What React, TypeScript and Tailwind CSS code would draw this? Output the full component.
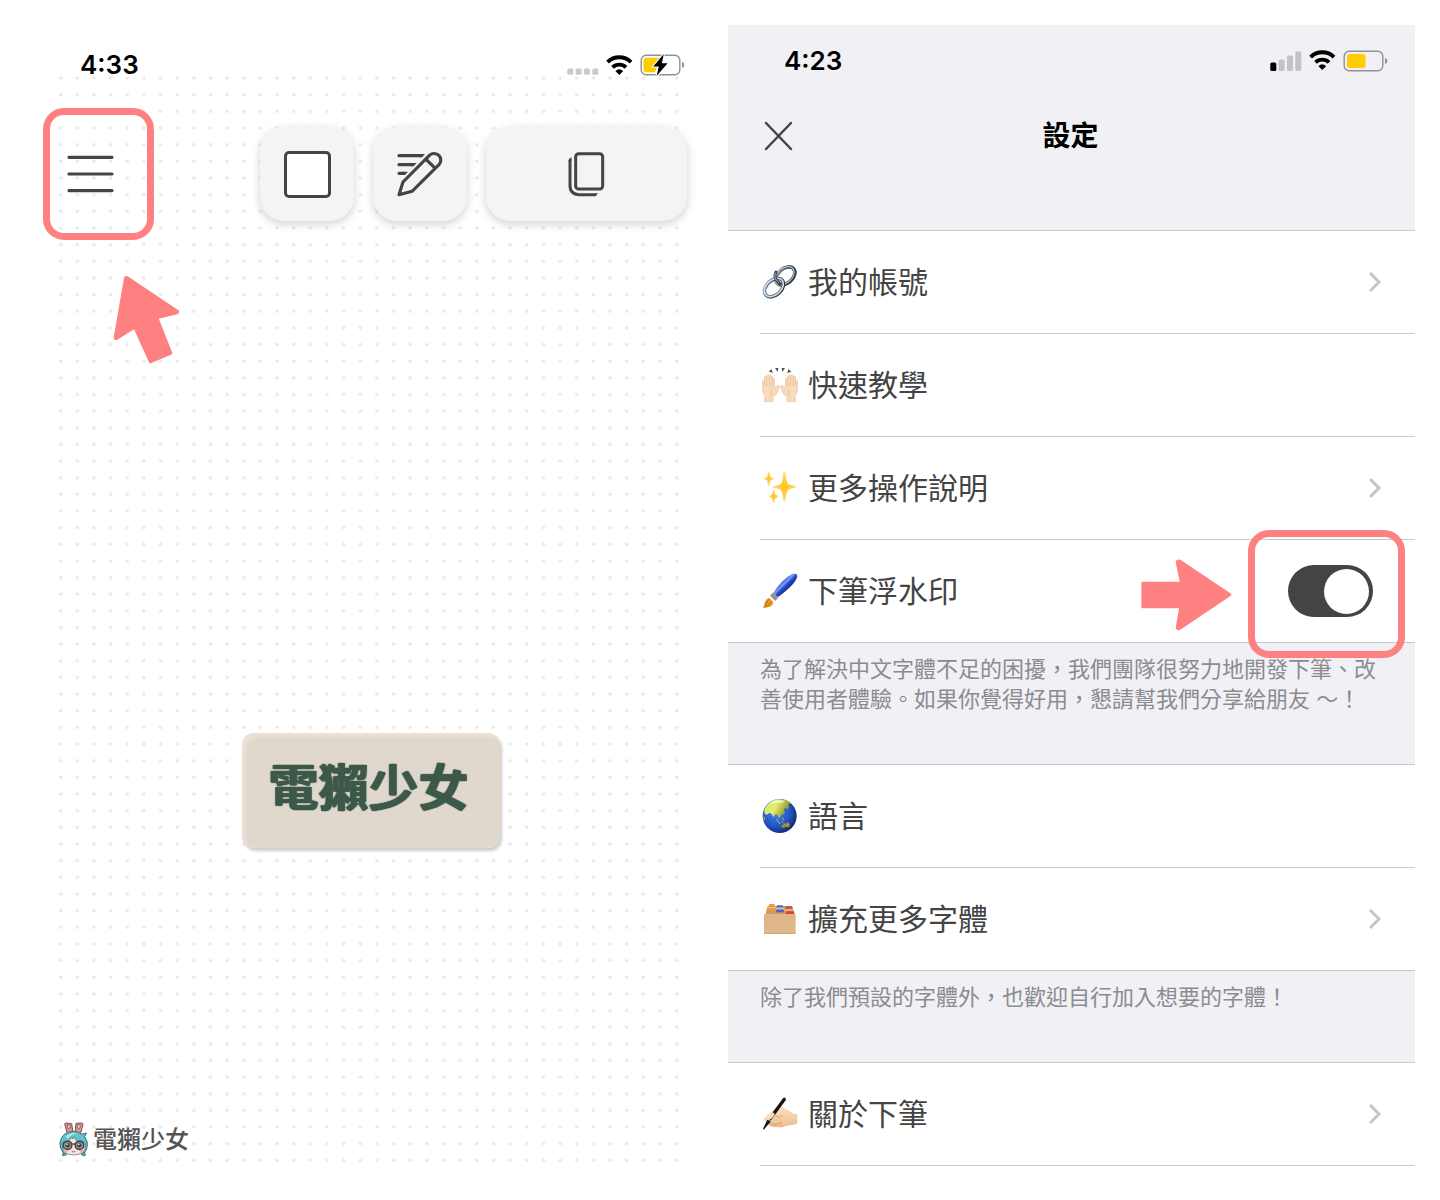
import type { ReactNode } from "react";

const CJK = "font-['Inter','Noto_Sans_CJK_TC',sans-serif]";

/* ---------- status bar ---------- */

function Wifi() {
  return (
    <svg width="27" height="21" viewBox="0 0 27 21" fill="none" stroke="#000" aria-hidden="true">
      <path d="M1.6 7.1A16.8 16.8 0 0 1 25 7.1" strokeWidth="4" />
      <path d="M6.6 12.3A9.6 9.6 0 0 1 20 12.3" strokeWidth="3.8" />
      <path d="M13.3 19.6L9.9 16.2A4.8 4.8 0 0 1 16.7 16.2Z" fill="#000" strokeWidth="0.8" strokeLinejoin="round" />
    </svg>
  );
}

function Battery({ charging }: { charging?: boolean }) {
  return (
    <svg width="45" height="24" viewBox="0 0 45 24" fill="none" aria-hidden="true">
      <rect x="1.2" y="2.2" width="38.6" height="19.6" rx="5" fill={charging ? "#fff" : "none"} stroke="#929295" strokeWidth="1.4" />
      <path d="M42 9v6c1.5-.4 2.3-1.6 2.3-3S43.5 9.4 42 9z" fill="#929295" />
      {charging ? (
        <>
          <path d="M6 4.8h15L12.5 14h5l-2.5 5.3H6a2.5 2.5 0 0 1-2.5-2.5V7.3A2.5 2.5 0 0 1 6 4.8z" fill="#fc0" />
          <path d="M23.8 1L13.2 13.5h5.6L16.6 23 27.6 10.3h-5.8z" fill="#000" stroke="#fff" strokeWidth="2" paintOrder="stroke" />
        </>
      ) : (
        <rect x="4" y="5" width="18.5" height="14" rx="2.5" fill="#fc0" />
      )}
    </svg>
  );
}

function Signal({ bars }: { bars?: boolean }) {
  if (!bars) {
    return (
      <svg width="32" height="20" viewBox="0 0 32 20" fill="#cacaca" aria-hidden="true">
        {[0, 8.3, 16.6, 25].map((x) => (
          <rect key={x} x={x + 0.3} y="13.5" width="6" height="6.2" rx="1.5" />
        ))}
      </svg>
    );
  }
  return (
    <svg width="32" height="20" viewBox="0 0 32 20" fill="#c3c2c8" aria-hidden="true">
      <rect x="0.3" y="11.5" width="6" height="8.5" rx="1.5" fill="#000" />
      <rect x="8.6" y="8.5" width="6" height="11.5" rx="1.5" />
      <rect x="17" y="4.5" width="6" height="15.5" rx="1.5" />
      <rect x="25.3" y="0.5" width="6" height="19.5" rx="1.5" />
    </svg>
  );
}

/* ---------- toolbar icons ---------- */

function PencilLines() {
  return (
    <svg width="46" height="46" viewBox="0 0 138 138" fill="none" stroke="#444" strokeWidth="9.5" strokeLinejoin="round" aria-hidden="true">
      <path d="M6 14H72" strokeLinecap="round" />
      <path d="M84 9.3L75 18.7H66V9.3z" fill="#444" stroke="none" />
      <path d="M6 41H44M6 67H20" strokeLinecap="round" />
      <path d="M59 36.3L50 45.7H40V36.3zM33 62.3L24 71.7H16V62.3z" fill="#444" stroke="none" />
      <path d="M6 131L18 93L98 12.5A20 20 0 0 1 126 41L45 121Z" />
      <path d="M86 24L115 52" />
    </svg>
  );
}

function CopyPages() {
  return (
    <svg width="37" height="46" viewBox="0 0 111 138" fill="none" stroke="#444" strokeWidth="9" aria-hidden="true">
      <rect x="23" y="8" width="81" height="106" rx="9" />
      <path d="M6 26V103Q6 131 34 131H80" />
      <path d="M1.5 30Q4 20 10.5 19V30zM78 126.5H90Q86 135.5 78 135.5z" fill="#444" stroke="none" />
    </svg>
  );
}

/* ---------- row pictograms ---------- */

function Pictogram({ children }: { children: ReactNode }) {
  return (
    <svg className="shrink-0" width="36" height="36" viewBox="0 0 108 108" fill="none" aria-hidden="true">
      {children}
    </svg>
  );
}

function LinkPic() {
  return (
    <Pictogram>
      <defs>
        <linearGradient id="steel" x1="0" y1="0" x2="1" y2="1">
          <stop offset="0" stopColor="#8aa3bd" />
          <stop offset="0.45" stopColor="#4f5861" />
          <stop offset="1" stopColor="#2f2f34" />
        </linearGradient>
      </defs>
      <g transform="rotate(-42 70 36)">
        <ellipse cx="70" cy="36" rx="33" ry="22" stroke="url(#steel)" strokeWidth="11" />
        <ellipse cx="69" cy="34" rx="33" ry="22" stroke="#bcd3e8" strokeWidth="3" />
      </g>
      <g transform="rotate(-42 36 71)">
        <ellipse cx="36" cy="71" rx="33" ry="22" stroke="url(#steel)" strokeWidth="11" />
        <ellipse cx="36" cy="70" rx="33" ry="22" stroke="#cbdff1" strokeWidth="5" />
      </g>
      <path d="M42 24C36 34 39 48 54 60" stroke="#3b3e43" strokeWidth="9" strokeLinecap="round" />
      <path d="M41 26C36 35 39 46 50 56" stroke="#a9bccd" strokeWidth="3" />
    </Pictogram>
  );
}

function HandsPic() {
  const hand = (
    <>
      <path
        d="M8 104L9 88Q1 76 1 62V44Q3 37 7 43V34Q9 24 14 29Q17 20 23 26Q28 23 31 30Q37 31 37 40L38 64L46 56Q52 54 52 60L46 75Q42 85 33 90L33 104Z"
        fill="#f9dabb"
        stroke="#ebbd95"
        strokeWidth="2"
        strokeLinejoin="round"
      />
      <path d="M7 43V58M14 32V56M23 29V56M31 33V58" stroke="#e3b48d" strokeWidth="2" />
      <path d="M30 86Q25 79 28 70" stroke="#dfae84" strokeWidth="2" />
    </>
  );
  return (
    <Pictogram>
      {hand}
      <g transform="matrix(-1 0 0 1 108 0)">{hand}</g>
      <path d="M20 13L29 7 32 18zM39 3L49 3 47 15zM59 3L69 3 61 15zM79 6L88 14 76 18z" fill="#555" />
    </Pictogram>
  );
}

function SparklesPic() {
  return (
    <Pictogram>
      <defs>
        <radialGradient id="glow">
          <stop offset="0" stopColor="#ffc31f" />
          <stop offset="0.6" stopColor="#ffd344" />
          <stop offset="1" stopColor="#ffe48a" />
        </radialGradient>
      </defs>
      <g fill="url(#glow)">
        <path d="M64 6H70Q72 36 79 42Q84 46 102 48V53Q84 55 79 59Q72 65 70 95H64Q62 65 56 59Q51 55 33 53V48Q51 46 56 42Q62 36 64 6z" />
        <path d="M18 5H22Q23 18 26 21Q28 23 35 24V28Q28 29 26 31Q23 34 22 47H18Q17 34 15 31Q13 29 6 28V24Q13 23 15 21Q17 18 18 5z" />
        <path d="M33 59H37Q38 71 41 74Q43 76 49 77V81Q43 82 41 84Q38 87 37 99H33Q32 87 29 84Q27 82 21 81V77Q27 76 29 74Q32 71 33 59z" />
      </g>
    </Pictogram>
  );
}

function BrushPic() {
  return (
    <Pictogram>
      <defs>
        <linearGradient id="lacquer" x1="0.3" y1="0.3" x2="0.65" y2="0.65">
          <stop offset="0" stopColor="#1c3fae" />
          <stop offset="0.4" stopColor="#7d9ff5" />
          <stop offset="0.6" stopColor="#2449cc" />
          <stop offset="1" stopColor="#162d86" />
        </linearGradient>
      </defs>
      <path d="M34 60Q60 18 91 3Q104 -1 106 9Q103 32 47 73z" fill="url(#lacquer)" />
      <path d="M33 58L48 74L40 84L24 69z" fill="#a3a3a7" />
      <path d="M31 62L45 77M28 66L42 81" stroke="#66666b" strokeWidth="2" />
      <path d="M22 74L34 87Q33 101 17 103L2 106Q7 98 8 89Q11 77 22 74z" fill="#ec9a2c" />
      <path d="M20 79Q14 90 8 102M28 87Q22 96 14 101" stroke="#a85f14" strokeWidth="2.5" />
    </Pictogram>
  );
}

function GlobePic() {
  return (
    <Pictogram>
      <defs>
        <radialGradient id="sea" cx="0.4" cy="0.4" r="0.65">
          <stop offset="0" stopColor="#3f8af0" />
          <stop offset="0.65" stopColor="#1f52c4" />
          <stop offset="1" stopColor="#14275f" />
        </radialGradient>
        <linearGradient id="land" x1="0" y1="0" x2="1" y2="0.4">
          <stop offset="0" stopColor="#d4ee7a" />
          <stop offset="0.5" stopColor="#e3ec6a" />
          <stop offset="1" stopColor="#7f8a26" />
        </linearGradient>
      </defs>
      <circle cx="53" cy="54" r="51" fill="url(#sea)" />
      <path
        d="M7 36Q17 11 43 4Q68 2 83 12L86 18L78 18L82 27L76 35L70 29L65 36L69 42L63 49L56 53L53 62L49 57L46 50L40 49L35 58L29 49L23 44L15 50L8 48Z"
        fill="url(#land)"
      />
      <path d="M44 63L51 75L56 78M61 59L65 67M59 70L64 74" stroke="#a7c545" strokeWidth="3" />
      <path d="M58 84L67 76L73 77L78 71L84 81L80 88L72 86L61 90Z" fill="#b58a2c" />
      <path d="M5 52L9 60L8 70Q4 63 5 52z" fill="#c9a93a" />
      <path d="M30 14Q46 8 62 11" stroke="#f6fbe0" strokeWidth="5" strokeLinecap="round" />
    </Pictogram>
  );
}

function FolderPic() {
  return (
    <Pictogram>
      <g transform="translate(0 5)">
        <path d="M10 37L17 10H91L99 37z" fill="#c79c6b" />
        <path d="M19 11L22 4H37L39 11zM13 27L16 18H37L39 27z" fill="#f0953c" />
        <path d="M43 14L45 8H62L64 14zM42 29L44 21H64L66 29z" fill="#3f63df" />
        <path d="M69 18L71 11H89L91 18zM71 34L73 26H95L97 34z" fill="#dc4438" />
        <path d="M14 15H43M43 17H68M68 22H93" stroke="#e9c99f" strokeWidth="3" />
        <rect x="6" y="34" width="95" height="60" rx="2" fill="#dfb788" />
        <path d="M7 92H100" stroke="#c89a67" strokeWidth="2" />
      </g>
    </Pictogram>
  );
}

function WritingPic() {
  return (
    <Pictogram>
      <defs>
        <linearGradient id="skin" x1="0" y1="0" x2="0" y2="1">
          <stop offset="0" stopColor="#fbe0c5" />
          <stop offset="1" stopColor="#efbd92" />
        </linearGradient>
      </defs>
      <path
        d="M6 68Q18 54 32 45L42 34Q56 27 67 37Q80 43 92 52L106 55V83Q88 87 76 89Q58 97 36 92Q20 93 20 85Q12 83 10 76z"
        fill="url(#skin)"
      />
      <path d="M40 60Q54 67 62 58M24 84Q42 86 60 80M36 91Q40 88 44 87M52 92Q56 89 60 88" stroke="#d39a70" strokeWidth="2.5" />
      <path d="M67 10L24 68" stroke="#151515" strokeWidth="10" strokeLinecap="round" />
      <path d="M17 70L26 77L5 101L3 98z" fill="#151515" />
      <path d="M8 68Q18 56 32 48L38 54Q34 66 20 73z" fill="#f9dcc0" />
    </Pictogram>
  );
}

/* ---------- settings list ---------- */

function Chevron() {
  return (
    <svg width="14" height="22" viewBox="0 0 14 22" fill="none" stroke="#c5c5c8" strokeWidth="3" aria-hidden="true">
      <path d="M1 2L10 11L1 20" />
    </svg>
  );
}

const rowClass = "flex h-[102px] w-full items-center gap-2.5 pl-0.5 text-left text-[30px] leading-10 text-[#444]";

function Row({ icon, label, chevron }: { icon: ReactNode; label: string; chevron?: boolean }) {
  return (
    <li>
      <button type="button" className={`${rowClass} pr-8`}>
        {icon}
        <span className="grow">{label}</span>
        {chevron && <Chevron />}
      </button>
    </li>
  );
}

function WatermarkRow() {
  return (
    <li className="relative">
      <label className={`${rowClass} pr-[42px]`}>
        <BrushPic />
        <span className="grow">下筆浮水印</span>
        <input
          type="checkbox"
          role="switch"
          defaultChecked
          className="flex h-[52px] w-[85px] appearance-none items-center rounded-full bg-[#aaa] px-1 before:size-[45px] before:rounded-full before:bg-white checked:justify-end checked:bg-[#444]"
        />
      </label>
      <svg className="pointer-events-none absolute right-[183px] top-[19px] z-10" width="92" height="72" viewBox="0 0 276 216" aria-hidden="true">
        <path
          d="M8 72H124L111 9Q113 4 120 6L270 107L120 208Q113 212 111 206L122 144H8z"
          fill="#ff8080"
          stroke="#ff8080"
          strokeWidth="8"
          strokeLinejoin="round"
        />
      </svg>
      <div className="pointer-events-none absolute -top-2.5 right-2.5 z-10 h-32 w-[157px] rounded-[21px] border-7 border-[#ff8080]" />
    </li>
  );
}

function Group({ children }: { children: ReactNode }) {
  return (
    <div className="border-y border-[#c9c9cd] bg-white pl-8">
      <ul className="divide-y divide-[#c9c9cd]">{children}</ul>
    </div>
  );
}

function SettingsPanel() {
  return (
    <section className="mt-[25px] bg-[#f1f0f5]">
      <header className="h-[205px]">
        <div className="flex h-[71px] items-center justify-between pl-14 pr-[27px]">
          <span className="text-[26px] font-semibold leading-8 text-black">4:23</span>
          <span className="flex items-center gap-[7px]">
            <Signal bars />
            <Wifi />
            <Battery />
          </span>
        </div>
        <div className="grid h-20 grid-cols-[1fr_auto_1fr] items-center pl-9">
          <button type="button" aria-label="關閉" className="justify-self-start">
            <svg width="29" height="30" viewBox="0 0 29 30" stroke="#444" strokeWidth="2.5" strokeLinecap="round" aria-hidden="true">
              <path d="M2 2L27 28M27 2L2 28" />
            </svg>
          </button>
          <h1 className="pr-[38px] text-[28px] font-semibold leading-10 text-black">設定</h1>
        </div>
      </header>
      <Group>
        <Row icon={<LinkPic />} label="我的帳號" chevron />
        <Row icon={<HandsPic />} label="快速教學" />
        <Row icon={<SparklesPic />} label="更多操作說明" chevron />
        <WatermarkRow />
      </Group>
      <p className="h-[121px] px-8 pt-[11px] text-[22px] leading-[30px] text-[#8b8b90]">
        為了解決中文字體不足的困擾，我們團隊很努力地開發下筆、改善使用者體驗。如果你覺得好用，懇請幫我們分享給朋友 ～！
      </p>
      <Group>
        <Row icon={<GlobePic />} label="語言" />
        <Row icon={<FolderPic />} label="擴充更多字體" chevron />
      </Group>
      <p className="h-[91px] px-8 pt-[11px] text-[22px] leading-[30px] text-[#8b8b90]">
        除了我們預設的字體外，也歡迎自行加入想要的字體！
      </p>
      <div className="border-t border-[#c9c9cd] bg-white pb-[34px] pl-8">
        <ul className="border-b border-[#c9c9cd]">
          <Row icon={<WritingPic />} label="關於下筆" chevron />
        </ul>
      </div>
    </section>
  );
}

/* ---------- canvas ---------- */

function DotGrid() {
  return (
    <svg className="pointer-events-none absolute inset-x-2.5 top-[70px] h-[1096px] w-[628px]" aria-hidden="true">
      <defs>
        <pattern id="dots" width="16.65" height="16.65" patternUnits="userSpaceOnUse">
          <circle cx="7.6" cy="8" r="1.75" fill="#e9e9e9" />
        </pattern>
      </defs>
      <rect width="100%" height="100%" fill="url(#dots)" />
    </svg>
  );
}

function Mascot() {
  return (
    <svg width="30" height="36" viewBox="0 0 90 108" fill="none" strokeLinejoin="round" aria-hidden="true">
      <path d="M24 32L17 6Q18 3 22 3L38 5L42 32zM48 32L51 4L68 3Q72 3 72 7L65 34z" fill="#ee8f8d" stroke="#7a4f58" strokeWidth="3" />
      <path d="M25 9L33 9L34 18L27 19zM55 9L64 9L62 19L55 18z" fill="#fff" stroke="#555" strokeWidth="2.5" />
      <path d="M13 92Q1 80 3 62Q8 30 43 28Q59 28 69 37L82 33L77 44Q89 60 84 76Q82 86 76 93Z" fill="#61c1cd" stroke="#3f6b76" strokeWidth="3" />
      <path d="M14 90Q8 96 11 102L24 98zM75 90Q82 96 78 102L66 98z" fill="#3fa3b3" stroke="#3f6b76" strokeWidth="2" />
      <path d="M20 44Q34 30 56 34Q40 36 25 50z" fill="#b5e5ea" />
      <path d="M10 62Q28 62 38 46Q40 56 44 44Q52 62 79 63Q84 98 44 99Q6 98 10 62z" fill="#fbe3dc" stroke="#4b6a72" strokeWidth="2" />
      <rect x="13" y="58" width="25" height="24" rx="11" fill="#a9a69f" stroke="#40444b" strokeWidth="5" />
      <rect x="49" y="58" width="25" height="24" rx="11" fill="#a9a69f" stroke="#40444b" strokeWidth="5" />
      <path d="M38 66H49" stroke="#40444b" strokeWidth="4" />
      <circle cx="26" cy="70" r="7" fill="#40444b" />
      <circle cx="61" cy="70" r="7" fill="#40444b" />
      <circle cx="24" cy="67" r="2.5" fill="#fff" />
      <circle cx="59" cy="67" r="2.5" fill="#fff" />
      <circle cx="20" cy="88" r="5" fill="#f5a9a5" />
      <circle cx="68" cy="88" r="5" fill="#f5a9a5" />
      <path d="M38 88Q44 92 49 88" stroke="#8a4a4a" strokeWidth="2.5" />
    </svg>
  );
}

const tile = "flex h-[94px] items-center justify-center rounded-[24px] bg-[#f4f4f4] shadow-[0_3px_10px_rgba(0,0,0,0.18)]";

function CanvasPanel() {
  return (
    <section className="relative flex flex-col">
      <DotGrid />
      <div className="relative mt-[45px] flex h-10 items-center justify-between pl-[37px] pr-0.5">
        <span className="text-[26px] font-semibold leading-8 text-black">4:33</span>
        <span className="flex items-center gap-[7px]">
          <Signal />
          <Wifi />
          <Battery charging />
        </span>
      </div>
      <div className="relative mt-[23px] flex items-center justify-between">
        <div className="relative flex h-[132px] w-[111px] items-center rounded-[21px] border-7 border-[#ff8080] pl-[17px]">
          <button type="button" aria-label="選單">
            <svg width="47" height="38" viewBox="0 0 47 38" stroke="#444" strokeWidth="3.2" strokeLinecap="round" aria-hidden="true">
              <path d="M2 2.3H45M2 19H45M2 35.6H45" />
            </svg>
          </button>
          <svg className="pointer-events-none absolute left-[63px] top-40" width="67" height="90" viewBox="0 0 201 270" aria-hidden="true">
            <path
              d="M37 9Q39 6 43 8L193 108Q196 111 192 114L132 128L174 235L112 261L65 157L12 190Q6 193 6 188z"
              fill="#ff8080"
              stroke="#ff8080"
              strokeWidth="8"
              strokeLinejoin="round"
            />
          </svg>
        </div>
        <div className="flex gap-[19px]">
          <button type="button" aria-label="方框" className={`${tile} w-[94px]`}>
            <span className="size-[47px] rounded-[5px] border-3 border-[#444] bg-white" />
          </button>
          <button type="button" aria-label="編輯文字" className={`${tile} w-[94px]`}>
            <PencilLines />
          </button>
          <button type="button" aria-label="複製" className={`${tile} w-[201px]`}>
            <CopyPages />
          </button>
        </div>
      </div>
      <div className="relative mt-[493px] flex justify-center pl-[11px]">
        <div className="flex h-[115px] w-[258px] justify-center rounded-xl bg-[#ddd4c8]/90 pr-1 pt-[22px] shadow-[2px_3px_3px_rgba(0,0,0,0.2),inset_4px_4px_3px_#ebe1d4]">
          <p className="text-[50px] font-bold leading-[66px] text-[#3b5849] [text-shadow:0_0_1px_#3b5849,1px_0_1px_#3b5849,-1px_0_1px_#3b5849]">
            電獺少女
          </p>
        </div>
      </div>
      <footer className="relative mb-[42px] mt-auto flex items-center gap-1 pl-4">
        <Mascot />
        <span className="text-[24px] font-medium leading-9 text-[#555]">電獺少女</span>
      </footer>
    </section>
  );
}

export default function App() {
  return (
    <main className={`grid min-h-screen grid-cols-[644fr_687fr] gap-x-[41px] bg-white pl-[43px] pr-[25px] ${CJK}`} lang="zh-Hant">
      <CanvasPanel />
      <SettingsPanel />
    </main>
  );
}
